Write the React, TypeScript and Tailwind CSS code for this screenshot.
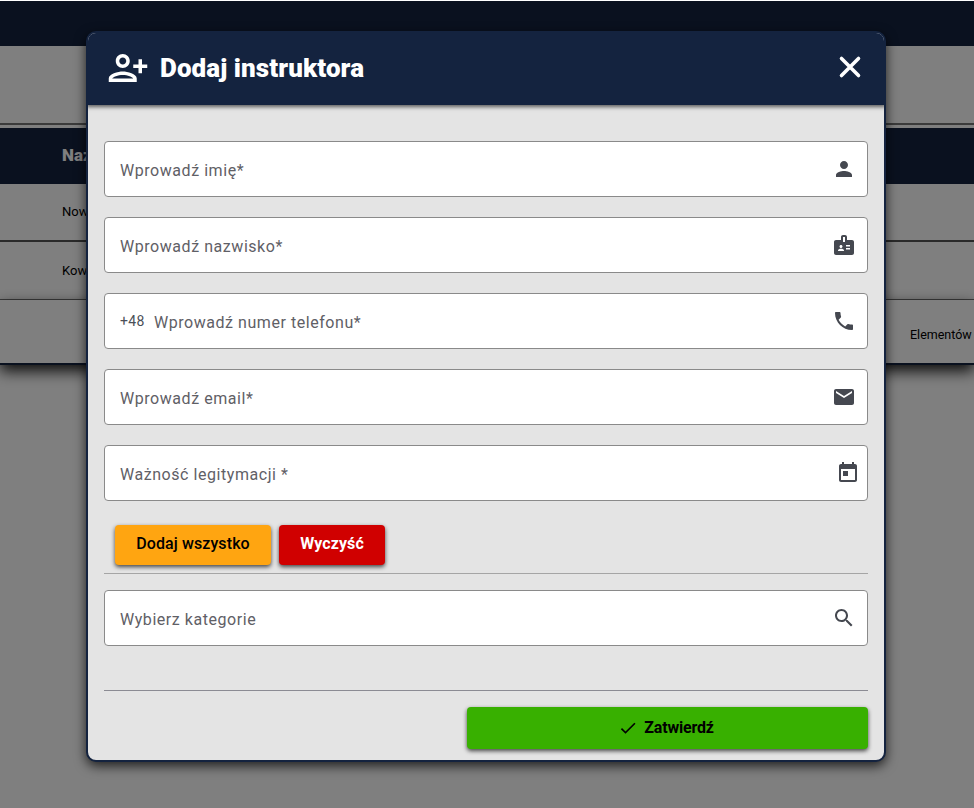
import React from "react";

const P = {
  person: "M12 12c2.21 0 4-1.79 4-4s-1.79-4-4-4-4 1.79-4 4 1.79 4 4 4zm0 2c-2.67 0-8 1.34-8 4v2h16v-2c0-2.66-5.33-4-8-4z",
  badge: "M20 7h-5V4c0-1.1-.9-2-2-2h-2c-1.1 0-2 .9-2 2v3H4c-1.1 0-2 .9-2 2v11c0 1.1.9 2 2 2h16c1.1 0 2-.9 2-2V9c0-1.1-.9-2-2-2zM9 12c.83 0 1.5.67 1.5 1.5S9.83 15 9 15s-1.5-.67-1.5-1.5S8.17 12 9 12zm3 6H6v-.43c0-.6.36-1.15.92-1.39C7.56 15.9 8.26 15.75 9 15.75s1.44.15 2.08.43c.55.24.92.78.92 1.39V18zm1-9h-2V4h2v5zm5 7.5h-4V15h4v1.5zm0-3h-4V12h4v1.5z",
  phone: "M6.62 10.79c1.44 2.83 3.76 5.14 6.59 6.59l2.2-2.2c.27-.27.67-.36 1.02-.24 1.12.37 2.33.57 3.57.57.55 0 1 .45 1 1V20c0 .55-.45 1-1 1-9.39 0-17-7.61-17-17 0-.55.45-1 1-1h3.5c.55 0 1 .45 1 1 0 1.25.2 2.45.57 3.57.11.35.03.74-.25 1.02l-2.2 2.2z",
  email: "M20 4H4c-1.1 0-1.99.9-1.99 2L2 18c0 1.1.9 2 2 2h16c1.1 0 2-.9 2-2V6c0-1.1-.9-2-2-2zm0 4l-8 5-8-5V6l8 5 8-5v2z",
  today: "M19 3h-1V1h-2v2H8V1H6v2H5c-1.11 0-1.99.9-1.99 2L3 19c0 1.1.89 2 2 2h14c1.1 0 2-.9 2-2V5c0-1.1-.9-2-2-2zm0 16H5V8h14v11zM7 10h5v5H7z",
  search: "M15.5 14h-.79l-.28-.27C15.41 12.59 16 11.11 16 9.5 16 5.91 13.09 3 9.5 3S3 5.91 3 9.5 5.91 16 9.5 16c1.61 0 3.09-.59 4.23-1.57l.27.28v.79l5 4.99L20.49 19l-4.99-5zm-6 0C7.01 14 5 11.99 5 9.5S7.01 5 9.5 5 14 7.01 14 9.5 11.99 14 9.5 14z",
  check: "M9 16.17 4.83 12l-1.42 1.41L9 19 21 7l-1.41-1.41z",
  add: "M13 8c0-2.21-1.79-4-4-4S5 5.79 5 8s1.79 4 4 4 4-1.79 4-4zm-2 0c0 1.1-.9 2-2 2s-2-.9-2-2 .9-2 2-2 2 .9 2 2zM1 18v2h16v-2c0-2.66-5.33-4-8-4s-8 1.34-8 4zm2 0c.2-.71 3.3-2 6-2 2.69 0 5.77 1.28 6 2H3zm17-3v-3h3v-2h-3V7h-2v3h-3v2h3v3h2z",
};

function Icon({ d, className }: { d: string; className: string }) {
  return (
    <svg viewBox="0 0 24 24" fill="currentColor" className={className}>
      <path d={d} />
    </svg>
  );
}

function Field({ label, icon, prefix, iconClass }: { label: string; icon: string; prefix?: string; iconClass?: string }) {
  return (
    <div className="flex h-[56px] items-center rounded-[4px] border border-[#8a8a8a] bg-white pl-[15px] pr-[11px]">
      {prefix && <span className="mr-[9px] pt-px text-[14px] tracking-[0.4px] text-[#4b4f58]">{prefix}</span>}
      <span className="flex-1 pt-[3px] text-[16px] tracking-[0.55px] text-[#5f6066]">{label}</span>
      <Icon d={icon} className={iconClass ?? "h-6 w-6 text-[#454850]"} />
    </div>
  );
}

export default function App() {
  return (
    <div className="relative h-[808px] w-[974px] overflow-hidden bg-white font-['Roboto',sans-serif]">
      <div className="mt-px h-[45px] bg-[#14233f]" />
      <div className="h-[77px]" />
      <div className="h-[2px] bg-[#777]" />
      <div className="h-[3px]" />
      <div className="flex h-[56px] items-center bg-[#14233f] pl-[62px] text-[17px] font-black text-white">Nazwa</div>
      <div className="flex h-[58px] items-center border-b-2 border-[#555] pl-[62px] text-[13px] text-black">Nowak</div>
      <div className="flex h-[58px] items-center border-b border-[#777] pl-[62px] text-[13px] text-black">Kowalski</div>
      <div className="flex h-[65px] items-center border-b-2 border-[#14233f] pl-[910px] pt-[8px] shadow-[0_6px_14px_rgba(0,0,0,0.9)]">
        <span className="whitespace-nowrap text-[12.5px] text-black">Elementów</span>
      </div>

      <div className="absolute inset-x-0 bottom-0 top-px bg-black/50" />

      <div className="absolute left-[86px] top-[31px] flex h-[731px] w-[800px] flex-col overflow-hidden rounded-[10px] border-2 border-[#14233f] bg-[#e4e4e4] shadow-[0_4px_12px_rgba(0,0,0,0.75)]">
        <div className="mx-[-2px] mt-[-2px] flex h-[74px] shrink-0 items-center bg-[#14233f] pl-[21px] pr-[19px] text-white shadow-[0_2px_4px_rgba(0,0,0,0.6)]">
          <Icon d={P.add} className="h-[42px] w-[42px]" />
          <span className="ml-[11px] flex-1 text-[26px] font-black tracking-[0.08px]">Dodaj instruktora</span>
          <svg viewBox="0 0 24 24" className="h-[24px] w-[24px] -translate-y-[1px]" fill="none" stroke="currentColor" strokeWidth="3.6" strokeLinecap="round">
            <path d="M3.5 3.5 20.5 20.5M20.5 3.5 3.5 20.5" />
          </svg>
          <span className="w-[5px]" />
        </div>
        <div className="flex flex-1 flex-col px-4 pt-[36px]">
          <div className="flex flex-col gap-5">
            <Field label="Wprowadź imię*" icon={P.person} />
            <Field label="Wprowadź nazwisko*" icon={P.badge} />
            <Field label="Wprowadź numer telefonu*" icon={P.phone} prefix="+48" />
            <Field label="Wprowadź email*" icon={P.email} />
            <Field label="Ważność legitymacji *" icon={P.today} iconClass="mr-[-4px] h-6 w-6 text-[#454850]" />
          </div>
          <div className="ml-[11px] mt-[24px] flex gap-2">
            <button className="h-[40px] w-[156px] rounded-[4px] bg-[#ffa511] pb-[2px] text-[16px] font-medium tracking-[0.1px] text-black shadow-[0_2px_4px_rgba(0,0,0,0.7)]">Dodaj wszystko</button>
            <button className="h-[40px] w-[106px] rounded-[4px] bg-[#d00000] pb-[2px] text-[16px] font-bold tracking-[0.1px] text-white shadow-[0_2px_4px_rgba(0,0,0,0.7)]">Wyczyść</button>
          </div>
          <div className="mt-[8px] h-px bg-[#a5a5a5]" />
          <div className="mt-[16px]">
            <Field label="Wybierz kategorie" icon={P.search} />
          </div>
          <div className="mt-[44px] h-px bg-[#8b8b93]" />
          <button className="ml-auto mt-[16px] flex h-[42px] w-[401px] items-center justify-center gap-[6px] rounded-[4px] bg-[#38b000] pr-[3px] text-[16px] font-bold tracking-[-0.2px] text-black shadow-[0_2px_4px_rgba(0,0,0,0.7)]">
            <Icon d={P.check} className="h-[20px] w-[20px]" />
            Zatwierdź
          </button>
        </div>
      </div>
    </div>
  );
}
